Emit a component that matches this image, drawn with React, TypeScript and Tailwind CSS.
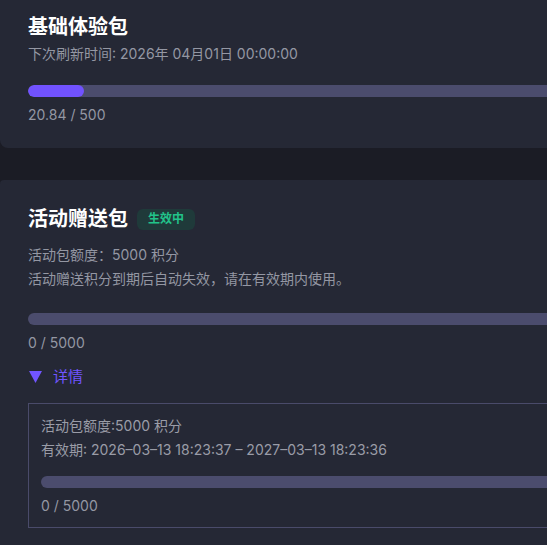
import React from "react";

function Bar({ value, max }: { value: number; max: number }) {
  const pct = Math.min(100, (value / max) * 100);
  return (
    <div className="h-3 w-full rounded-full bg-[#4b4c6d] overflow-hidden">
      <div className="h-full rounded-full bg-[#7152ff]" style={{ width: `${pct}%` }} />
    </div>
  );
}

export default function App() {
  return (
    <div
      className="w-[547px] h-[545px] overflow-hidden bg-[#1b1c25]"
      style={{ fontFamily: 'Inter, "Noto Sans CJK SC", sans-serif' }}
    >
      <div className="w-[640px]">
        {/* 基础体验包 */}
        <div className="bg-[#252835] rounded-b-lg pl-[28px] pt-[13px] pb-[23px]">
          <div className="text-[20px] leading-7 font-bold text-white">基础体验包</div>
          <div className="mt-[3px] text-[14px] leading-5 text-[#9497a3]">
            下次刷新时间: 2026年 04月01日 00:00:00
          </div>
          <div className="mt-[21px]">
            <Bar value={20.84} max={228} />
          </div>
          <div className="mt-[8px] text-[14px] leading-5 text-[#9497a3]">20.84 / 500</div>
        </div>

        {/* 活动赠送包 */}
        <div className="mt-8 bg-[#252835] rounded-tl-sm pl-[28px] pt-[25px] pb-[20px]">
          <div className="flex items-center">
            <span className="text-[20px] leading-7 font-bold text-white">活动赠送包</span>
            <span className="ml-[9px] inline-flex h-[21px] items-center rounded-md bg-[#1f3a3a] px-[11px] text-[12px] font-semibold text-[#22c38a]">
              生效中
            </span>
          </div>
          <div className="mt-[10px] text-[14px] leading-6 text-[#9497a3]">
            <div>活动包额度：5000 积分</div>
            <div>活动赠送积分到期后自动失效，请在有效期内使用。</div>
          </div>
          <div className="mt-[22px]">
            <Bar value={0} max={5000} />
          </div>
          <div className="mt-[8px] text-[14px] leading-5 text-[#9497a3]">0 / 5000</div>

          <div className="mt-[13px] flex h-[22px] items-center text-[#7155ff]">
            <svg width="13" height="12" viewBox="0 0 13 12" className="ml-px">
              <polygon points="0,0 13,0 6.5,12" fill="#7155ff" />
            </svg>
            <span className="ml-[11px] text-[15px]">详情</span>
          </div>

          <div className="mt-[15px] border border-[#4a4b6a] pl-[12px] pt-[10px] pb-[11px]">
            <div className="text-[14px] leading-6 text-[#9a9ca7]">
              <div>活动包额度:5000 积分</div>
              <div>有效期: 2026–03–13 18:23:37 – 2027–03–13 18:23:36</div>
            </div>
            <div className="mt-[14px]">
              <Bar value={0} max={5000} />
            </div>
            <div className="mt-[8px] text-[14px] leading-5 text-[#9497a3]">0 / 5000</div>
          </div>
        </div>
      </div>
    </div>
  );
}
